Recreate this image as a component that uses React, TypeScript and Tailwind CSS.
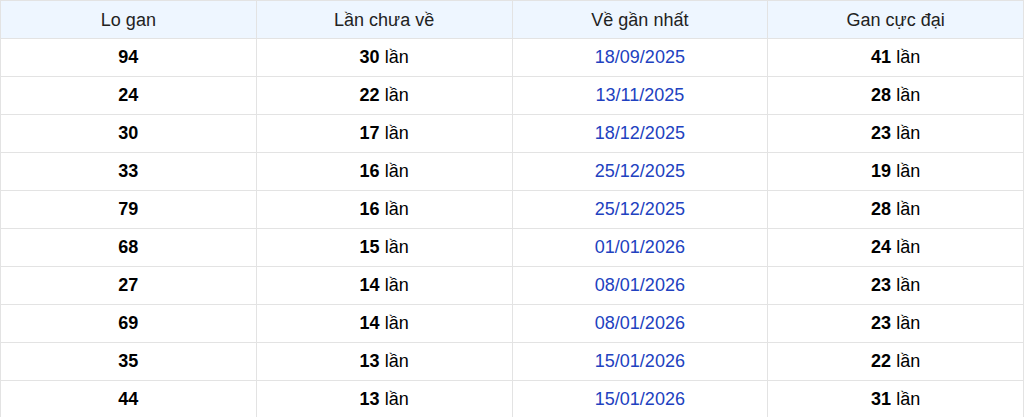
import React from "react";

const rows: [string, string, string, string][] = [
  ["94", "30", "18/09/2025", "41"],
  ["24", "22", "13/11/2025", "28"],
  ["30", "17", "18/12/2025", "23"],
  ["33", "16", "25/12/2025", "19"],
  ["79", "16", "25/12/2025", "28"],
  ["68", "15", "01/01/2026", "24"],
  ["27", "14", "08/01/2026", "23"],
  ["69", "14", "08/01/2026", "23"],
  ["35", "13", "15/01/2026", "22"],
  ["44", "13", "15/01/2026", "31"],
];

export default function App() {
  return (
    <div className="w-[1024px] bg-white" style={{ fontFamily: '"Liberation Sans", Arial, sans-serif' }}>
      <table className="w-[1024px] table-fixed border-collapse text-[18px] leading-[21px]">
        <thead>
          <tr className="h-[38px] bg-[#eef6ff] text-[#222]">
            <th className="border border-[#e3e3e3] pt-px font-normal">Lo gan</th>
            <th className="border border-[#e3e3e3] pt-px font-normal">Lần chưa về</th>
            <th className="border border-[#e3e3e3] pt-px font-normal">Về gần nhất</th>
            <th className="border border-[#e3e3e3] pt-px font-normal">Gan cực đại</th>
          </tr>
        </thead>
        <tbody>
          {rows.map((r, i) => (
            <tr key={i} className="h-[38px] text-black">
              <td className="border border-[#e3e3e3] text-center font-bold">{r[0]}</td>
              <td className="border border-[#e3e3e3] text-center">
                <b>{r[1]}</b> lần
              </td>
              <td className="border border-[#e3e3e3] text-center text-[#2141c0]">{r[2]}</td>
              <td className="border border-[#e3e3e3] text-center">
                <b>{r[3]}</b> lần
              </td>
            </tr>
          ))}
        </tbody>
      </table>
    </div>
  );
}
